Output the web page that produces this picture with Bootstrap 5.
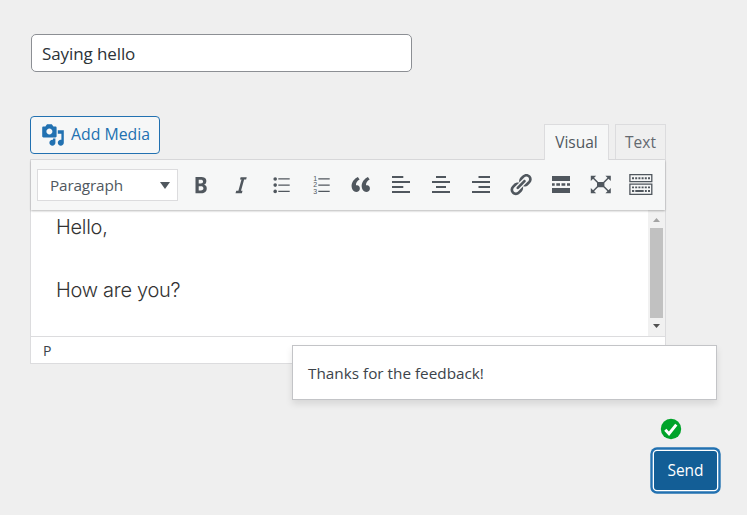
<!DOCTYPE html>
<html lang="en">
<head>
<meta charset="utf-8">
<meta name="viewport" content="width=device-width, initial-scale=1">
<title>Feedback</title>
<link href="https://cdn.jsdelivr.net/npm/bootstrap@5.3.0/dist/css/bootstrap.min.css" rel="stylesheet">
<style>
body{background:#efefef;font-family:"Open Sans","Noto Sans",sans-serif;font-size:15.5px;color:#3c434a;height:515px;overflow:hidden}
.page{padding:34px 30px 0}
.subject{width:381px;height:38px;margin-left:1px;border:1px solid #8c8f94;border-radius:5px;padding:0 10px;font-size:17px;line-height:37px;color:#2c3338;background:#fff;letter-spacing:-.1px}
.composer{width:636px;margin-top:44px}
.tools{height:43px}
.btn-media{width:130px;height:38px;border:1px solid #2271b1;border-radius:4px;background:#f6f7f7;color:#2271b1;padding:0 0 0 10px;gap:6px;font-size:15.8px;line-height:1}
.tab{height:35px;border:1px solid #dcdcde;border-bottom:0;color:#646970;font-size:15.5px;line-height:34px;text-align:center;background:#efefef;margin-left:6px;padding:0}
.tab-visual{width:65px;height:36px;background:#f6f7f7;color:#50575e;z-index:2;margin-bottom:-1px}
.tab-text{width:51px}
.editor{border:1px solid #dcdcde;background:#fff;height:205px}
.bar{height:50px;background:#f6f7f7;padding-left:6px;box-shadow:0 1px 2px rgba(0,0,0,.28);z-index:1}
.format{width:141px;height:32px;border:1px solid #dcdcde;background:#fff;color:#50575e;padding:0 7px 0 12px;font-size:15.3px;border-radius:0;line-height:32px;letter-spacing:-.15px}
.ico{width:40px;height:50px;padding:0 0 2px 3px;border:0;color:#50575e;line-height:1}
.icons{margin-left:1px}
.writing{height:127px;border-bottom:1px solid #dcdcde}
.message{font-family:Inter,sans-serif;font-size:20px;line-height:31.5px;color:#333;padding:2px 0 0 25px;font-weight:350;letter-spacing:-.28px}
.message p{margin-bottom:31px}
.scroll{width:17px;background:#f1f1f1}
.thumb{width:13px;height:90px;background:#c1c1c1}
.path{height:26px;padding-left:12px;font-size:14px;line-height:27px}
.notice{left:292px;top:345px;width:425px;height:55px;background:#fff;border:1px solid #c3c4c7;box-shadow:0 4px 7px rgba(0,0,0,.1);z-index:3;padding:0 15px;font-size:15.3px;line-height:55px}
.actions{width:63px;margin:54px 0 0 624px}
.btn-send{width:63px;height:39px;margin-top:11px;background:#135e96;color:#fff;border:0;border-radius:3px;box-shadow:0 0 0 1.3px #fff,0 0 0 3.7px #2271b1;padding:0;font-size:15.5px;line-height:39px}
.btn-send:hover{background:#135e96;color:#fff}
.tick{margin-left:6px}
</style>
<script src="https://cdn.jsdelivr.net/npm/bootstrap@5.3.0/dist/js/bootstrap.bundle.min.js"></script>
</head>
<body>
<main class="page">
  <div class="subject">Saying hello</div>
  <section class="composer">
    <div class="tools d-flex justify-content-between">
      <button class="btn btn-media d-flex align-items-center"><svg width="24" height="24" viewBox="0 0 20 20" fill="currentColor"><path d="M13 11V4c0-.55-.45-1-1-1h-1.67L9 1H5L3.67 3H2c-.55 0-1 .45-1 1v7c0 .55.45 1 1 1h10c.55 0 1-.45 1-1zM7 4.5c1.38 0 2.5 1.12 2.5 2.5S8.38 9.5 7 9.5 4.5 8.38 4.5 7 5.62 4.5 7 4.5zM14 6h5v10.5c0 1.38-1.12 2.5-2.5 2.5S14 17.88 14 16.5s1.12-2.5 2.5-2.5c.17 0 .34.02.5.05V9h-3V6zm-4 8.05V13h2v3.5c0 1.38-1.12 2.5-2.5 2.5S7 17.88 7 16.5 8.12 14 9.5 14c.17 0 .34.02.5.05z"/></svg><span class="text-nowrap">Add Media</span></button>
      <div class="d-flex align-items-end">
        <div class="tab tab-visual position-relative">Visual</div>
        <div class="tab tab-text">Text</div>
      </div>
    </div>
    <div class="editor d-flex flex-column">
      <div class="bar d-flex align-items-center position-relative">
        <div class="format d-flex align-items-center justify-content-between"><span>Paragraph</span><svg width="10" height="7" viewBox="0 0 10 7" fill="#50575e"><path d="M0 0h10L5 7z"/></svg></div>
        <div class="icons d-flex">
          <button class="btn ico" aria-label="Bold"><svg width="25" height="25" viewBox="0 0 20 20" fill="currentColor"><path d="M6 4v13h4.54c1.37 0 2.46-.33 3.26-1 .8-.66 1.2-1.58 1.2-2.77 0-.84-.17-1.51-.51-2.01s-.9-.85-1.67-1.03v-.09c.57-.1 1.02-.4 1.36-.9s.51-1.13.51-1.91c0-1.14-.39-1.98-1.17-2.5C12.75 4.26 11.5 4 9.78 4H6zm2.57 5.15V6.26h1.36c.73 0 1.27.11 1.61.32.34.22.51.58.51 1.07 0 .54-.16.92-.47 1.15s-.82.35-1.51.35h-1.5zm0 2.19h1.6c1.44 0 2.16.53 2.16 1.61 0 .6-.17 1.05-.51 1.34s-.86.43-1.57.43H8.57v-3.38z"/></svg></button>
          <button class="btn ico" aria-label="Italic"><svg width="25" height="25" viewBox="0 0 20 20" fill="currentColor"><path d="M15 4.1h-4.9l-.5 1.9h1.2l-2.5 9H6.6L6 16.9h5.1l.5-1.9h-1.2l2.5-9h1.6z"/></svg></button>
          <button class="btn ico" aria-label="Bulleted list"><svg width="25" height="25" viewBox="0 0 25 25" fill="currentColor"><circle cx="7.2" cy="7" r="1.8"/><circle cx="7.2" cy="13.1" r="1.8"/><circle cx="7.2" cy="19.4" r="1.8"/><path d="M10.3 6.3H21.7v1.3H10.3zM10.3 12.4H21.7v1.3H10.3zM10.3 18.7H21.7v1.3H10.3z"/></svg></button>
          <button class="btn ico" aria-label="Numbered list"><svg width="25" height="25" viewBox="0 0 25 25" fill="currentColor"><g font-family="Liberation Sans" font-size="7" font-weight="400"><text x="5.3" y="9">1</text><text x="5.3" y="15.2">2</text><text x="5.3" y="21.6">3</text></g><path d="M10.3 6.3H21.7v1.3H10.3zM10.3 12.4H21.7v1.3H10.3zM10.3 18.7H21.7v1.3H10.3z"/></svg></button>
          <button class="btn ico" aria-label="Quote"><svg width="25" height="25" viewBox="0 0 20 20" fill="currentColor"><path d="M9.49 13.22c0-.74-.2-1.38-.61-1.9-.62-.78-1.83-.88-2.53-.72-.29-1.65 1.11-3.75 2.92-4.65L7.88 4c-2.73 1.3-5.42 4.28-4.96 8.05C3.21 14.43 4.59 16 6.54 16c.85 0 1.56-.25 2.12-.75s.83-1.18.83-2.03zm8.05 0c0-.74-.2-1.38-.61-1.9-.63-.78-1.83-.88-2.53-.72-.29-1.65 1.11-3.75 2.92-4.65L15.93 4c-2.73 1.3-5.41 4.28-4.95 8.05.29 2.38 1.66 3.95 3.61 3.95.85 0 1.56-.25 2.12-.75s.83-1.18.83-2.03z"/></svg></button>
          <button class="btn ico" aria-label="Align left"><svg width="25" height="25" viewBox="0 0 25 25" fill="currentColor"><path d="M4 4h11.3v2H4zM4 9h18v2H4zM4 14h11.3v2H4zM4 19h18v2H4z"/></svg></button>
          <button class="btn ico" aria-label="Align center"><svg width="25" height="25" viewBox="0 0 25 25" fill="currentColor"><path d="M8 4h10v2H8zM4 9h18v2H4zM8 14h10v2H8zM4 19h18v2H4z"/></svg></button>
          <button class="btn ico" aria-label="Align right"><svg width="25" height="25" viewBox="0 0 25 25" fill="currentColor"><path d="M10.5 4H22v2H10.5zM4 9h18v2H4zM10.5 14H22v2H10.5zM4 19h18v2H4z"/></svg></button>
          <button class="btn ico" aria-label="Link"><svg width="25" height="25" viewBox="0 0 20 20" fill="currentColor"><path d="M17.74 2.76c1.68 1.69 1.68 4.41 0 6.1l-1.53 1.52c-1.12 1.12-2.7 1.47-4.14 1.09l2.62-2.61.76-.77.76-.76c.84-.84.84-2.2 0-3.04-.84-.85-2.2-.85-3.04 0l-.77.76-3.38 3.38c-.37-1.44-.02-3.02 1.1-4.14l1.52-1.53c1.69-1.68 4.42-1.68 6.1 0zM8.59 13.43l5.34-5.34c.42-.42.42-1.1 0-1.52-.44-.43-1.13-.39-1.53 0l-5.33 5.34c-.42.42-.42 1.1 0 1.52.44.43 1.13.39 1.52 0zm-.76 2.29l4.14-4.15c.38 1.44.03 3.02-1.09 4.14l-1.52 1.53c-1.69 1.68-4.41 1.68-6.1 0-1.68-1.68-1.68-4.42 0-6.1l1.53-1.52c1.12-1.12 2.7-1.47 4.14-1.1l-4.14 4.15c-.85.84-.85 2.2 0 3.05.84.84 2.2.84 3.04 0z"/></svg></button>
          <button class="btn ico" aria-label="Read more"><svg width="25" height="25" viewBox="0 0 25 25" fill="currentColor"><path d="M4 4h18v5H4zM4 11.3h2.7v2.5H4zM8.3 11.3H12v2.5H8.3zM13.5 11.3h3.8v2.5h-3.8zM19 11.3h3v2.5h-3zM4 16h18v5H4z"/></svg></button>
          <button class="btn ico" aria-label="Fullscreen"><svg width="25" height="25" viewBox="0 0 25 25" fill="currentColor"><path d="M9 10h7.4v5.2H9zM2.8 3.7h5.4L2.8 9.1zM22.8 3.7v5.4l-5.4-5.4zM2.8 21.3v-5.4l5.4 5.4zM22.8 21.3h-5.4l5.4-5.4z"/><path d="M4.5 5.3l5 5M21 5.3l-5 5M4.5 19.7l5-5M21 19.7l-5-5" stroke="currentColor" stroke-width="1.5"/></svg></button>
          <button class="btn ico" aria-label="Toolbar toggle"><svg width="25" height="25" viewBox="0 0 25 25" fill="none" stroke="currentColor"><path d="M1.9 2.7h21.9v7H1.9zM1.9 12.1h21.9v10.2H1.9z" stroke-width="1.3"/><path d="M4 6.2h18" stroke-width="2" stroke-dasharray="2 1.2"/><path d="M4 15.4h18" stroke-width="1.8" stroke-dasharray="2 1.2"/><path d="M4 19h2.2M7.3 19h8.4M16.9 19h1.9M20 19h2" stroke-width="1.8"/></svg></button>
        </div>
      </div>
      <div class="writing d-flex justify-content-between">
        <div class="message"><p>Hello,</p><p>How are you?</p></div>
        <div class="scroll d-flex flex-column align-items-center justify-content-between py-2"><svg width="7" height="4" viewBox="0 0 7 4" fill="#a3a3a3"><path d="M3.5 0L7 4H0z"/></svg><div class="thumb"></div><svg width="7" height="4" viewBox="0 0 7 4" fill="#505050"><path d="M0 0h7L3.5 4z"/></svg></div>
      </div>
      <div class="path">P</div>
    </div>
  </section>
  <div class="actions">
    <svg class="tick d-block" width="22" height="22" viewBox="0 0 22 22"><circle cx="11" cy="11" r="10.2" fill="#00a32a"/><path d="M5.3 11.8l3.7 3.9 7.3-9" fill="none" stroke="#fff" stroke-width="2.9"/></svg>
    <button class="btn btn-send">Send</button>
  </div>
</main>
<div class="notice position-absolute" role="status">Thanks for the feedback!</div>
</body>
</html>
